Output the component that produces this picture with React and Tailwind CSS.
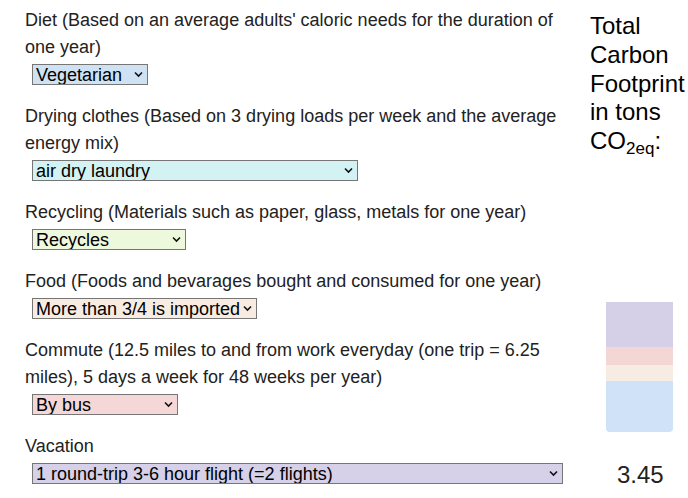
import React from "react";

const sections = [
  {
    label: "Diet (Based on an average adults' caloric needs for the duration of one year)",
    value: "Vegetarian",
    cls: "w-[116px] bg-[#cfe2f3]",
  },
  {
    label: "Drying clothes (Based on 3 drying loads per week and the average energy mix)",
    value: "air dry laundry",
    cls: "w-[326px] bg-[#d2f2f4]",
  },
  {
    label: "Recycling (Materials such as paper, glass, metals for one year)",
    value: "Recycles",
    cls: "w-[154px] bg-[#eef8dd]",
  },
  {
    label: "Food (Foods and bevarages bought and consumed for one year)",
    value: "More than 3/4 is imported",
    cls: "w-[225px] bg-[#f8ece2]",
  },
  {
    label: "Commute (12.5 miles to and from work everyday (one trip = 6.25 miles), 5 days a week for 48 weeks per year)",
    value: "By bus",
    cls: "w-[146px] bg-[#f4d7d6]",
  },
  {
    label: "Vacation",
    value: "1 round-trip 3-6 hour flight (=2 flights)",
    cls: "w-[531px] bg-[#d6d0e9]",
  },
];

function Section({ s }) {
  return (
    <div className="flex flex-col">
      <div className="leading-[27px] text-[#222]">{s.label}</div>
      <div className="relative mt-[3px] ml-[7px] self-start">
        <select
          defaultValue={s.value}
          className={
            "block appearance-none h-[21px] border border-[#767676] text-black text-[18px] leading-[19px] pl-[3px] pr-[14px] pt-[1px] pb-0 " +
            s.cls
          }
        >
          <option>{s.value}</option>
        </select>
        <svg
          className="pointer-events-none absolute right-[5px] top-[7px]"
          width="9"
          height="7"
          viewBox="0 0 9 7"
        >
          <path d="M1 1.5 L4.5 5 L8 1.5" fill="none" stroke="#111" strokeWidth="1.6" />
        </svg>
      </div>
    </div>
  );
}

export default function App() {
  return (
    <div className="flex w-[688px] h-[498px] bg-white font-['Liberation_Sans',Arial,sans-serif] text-[18px] overflow-hidden">
      <div className="w-[570px] shrink-0 pl-[25px] pt-[7px] flex flex-col gap-[18px]">
        {sections.map((s) => (
          <Section key={s.label} s={s} />
        ))}
      </div>
      <div className="ml-[20px] w-[98px] shrink-0 pt-[12px] flex flex-col">
        <div className="text-[24px] leading-[28.75px] text-black">
          Total Carbon Footprint in tons CO
          <span className="text-[17px] leading-none relative top-[5px]">2eq</span>:
        </div>
        <div className="mt-[146px] ml-[16px] w-[67px] h-[130px] flex flex-col rounded-b-[4px] overflow-hidden">
          <div className="h-[45px] bg-[#d5cfe8]" />
          <div className="h-[18px] bg-[#f4d6d5]" />
          <div className="h-[16px] bg-[#f7ece3]" />
          <div className="h-[51px] bg-[#cfe2f7]" />
        </div>
        <div className="mt-[29px] ml-[27px] text-[24px] leading-[28.75px] text-[#222]">3.45</div>
      </div>
    </div>
  );
}
